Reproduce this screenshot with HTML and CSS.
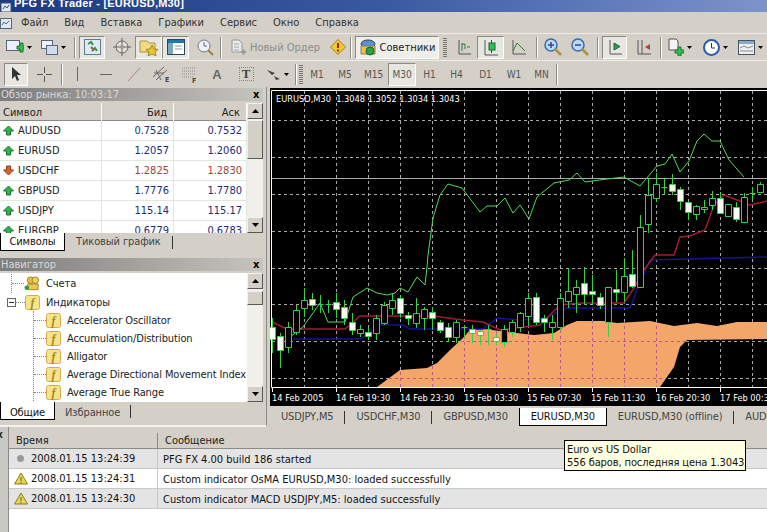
FILE: index.html
```html
<!DOCTYPE html>
<html lang="ru">
<head>
  <meta charset="UTF-8">
  <title>PFG FX Trader</title>
  <link rel="stylesheet" href="styles.css">
</head>
<body>
  <svg class="defs" width="0" height="0">
    <symbol id="up" viewBox="0 0 11 11"><path d="M5.5 1 10.5 6H7.5V10H3.5V6H.5z" fill="#2fb84a" stroke="#1c6b33"/></symbol>
    <symbol id="down" viewBox="0 0 11 11"><path d="M5.5 10 10.5 5H7.5V1H3.5V5H.5z" fill="#e0602c" stroke="#8a3a20"/></symbol>
    <symbol id="ind" viewBox="0 0 15 15"><rect x=".5" y=".5" width="14" height="14" rx="2" fill="#f7e48a" stroke="#d8a850"/><text x="7.5" y="12" class="ind-f">f</text></symbol>
    <symbol id="warn" viewBox="0 0 14 13"><path d="M7 1 13.500 12H.5z" fill="#e9d84a" stroke="#8a7a20"/><path d="M7 5V9M7 10v1.500" stroke="#555"/></symbol>
    <symbol id="arrow" viewBox="0 0 5 3"><path d="M0 0H5L2.500 3z" fill="#000"/></symbol>
  </svg>

  <div class="titlebar">
    <svg class="title-icon" width="12" height="12" viewBox="0 0 12 12"><rect x="1" y="3" width="10" height="9" fill="#dfe8f5" stroke="#456"/><path d="M3 9 5 6 7 8 9 5" fill="none" stroke="#357"/></svg>
    <span class="title-text">PFG FX Trader - [EURUSD,M30]</span>
  </div>

  <div class="menubar">
    <svg class="menu-icon" width="12" height="14" viewBox="0 0 12 14"><rect x=".5" y="2.500" width="11" height="10" fill="#dfe8f5" stroke="#567"/><path d="M2 9 4 6 6 8 9 5" fill="none" stroke="#468"/></svg>
    <span>Файл</span><span>Вид</span><span>Вставка</span><span>Графики</span><span>Сервис</span><span>Окно</span><span>Справка</span>
  </div>

  <div class="toolbar toolbar-main">
    <div class="tb"><svg width="18" height="16" viewBox="0 0 18 16"><rect x=".5" y="1.500" width="13" height="10" fill="#eef" stroke="#567"/><path d="M11 7h3V4h3v3h1v3h-1v3h-3v-3h-3z" fill="#2fc04a" stroke="#1c7a33"/></svg><svg class="dd" width="5" height="3"><use href="#arrow"/></svg></div>
    <div class="tb"><svg width="17" height="15" viewBox="0 0 17 15"><rect x=".5" y=".5" width="11" height="8" fill="#eef" stroke="#567"/><rect x="5.500" y="5.500" width="11" height="9" fill="#cfdcf0" stroke="#567"/></svg><svg class="dd" width="5" height="3"><use href="#arrow"/></svg></div>
    <div class="tb tb-sep"><i class="sep"></i></div>
    <div class="tb tb-on"><svg width="17" height="16" viewBox="0 0 17 16"><rect x=".5" y=".5" width="16" height="15" fill="#dfeaf8" stroke="#678"/><path d="M4 5 7 3 9 6M8 12 11 9 13 12" fill="none" stroke="#2a9a40" stroke-width="2"/><path d="M7 8 10 11" stroke="#c44" stroke-width="2"/></svg></div>
    <div class="tb tb-target"><svg width="20" height="20" viewBox="0 0 20 20"><circle cx="10" cy="10" r="6" fill="#e4e0d8" stroke="#666"/><path d="M10 1V19M1 10H19" stroke="#666"/><circle cx="10" cy="10" r="2" fill="#999"/></svg></div>
    <div class="tb tb-on"><svg width="20" height="18" viewBox="0 0 20 18"><path d="M1 3H8L10 5H16V14H1z" fill="#f2da84" stroke="#b09040"/><path d="M13 7 15 11 19 11.500 16 14 17 18 13 16 9 18 10 14 7 11.500 11 11z" fill="#e8c830" stroke="#a08820"/></svg></div>
    <div class="tb tb-on"><svg width="18" height="16" viewBox="0 0 18 16"><rect x=".5" y=".5" width="17" height="15" fill="#fff" stroke="#345"/><rect x="1" y="1" width="16" height="3" fill="#27a"/><rect x="1" y="4" width="5" height="11" fill="#7ab"/><path d="M8 7H15M8 10H15" stroke="#89a"/></svg></div>
    <div class="tb"><svg width="18" height="18" viewBox="0 0 18 18"><circle cx="8" cy="8" r="6" fill="#eef2f8" stroke="#778"/><path d="M8 4V8H11" fill="none" stroke="#667"/><path d="M12 12 17 17" stroke="#a08040" stroke-width="2"/></svg></div>
    <div class="tb tb-sep"><i class="sep"></i></div>
    <div class="tb tb-order"><svg width="17" height="17" viewBox="0 0 17 17"><path d="M2 1H9L12 4V13H2z" fill="#e8e8e8" stroke="#999"/><path d="M4 5H9M4 8H9M4 11H9" stroke="#aaa"/><path d="M11 13H16M13.500 10.500V15.500" stroke="#999" stroke-width="2"/></svg><span>Новый Ордер</span></div>
    <div class="tb"><svg width="16" height="16" viewBox="0 0 16 16"><path d="M8 .5 15.500 8 8 15.500 .5 8z" fill="#f0c830" stroke="#a08020"/><path d="M8 4V9M8 10.500V12.500" stroke="#a02010" stroke-width="2"/></svg></div>
    <div class="tb tb-sep"><i class="sep"></i></div>
    <div class="tb tb-on tb-expert"><svg width="18" height="17" viewBox="0 0 18 17"><ellipse cx="9" cy="5" rx="7" ry="4" fill="#5a90d8" stroke="#345"/><path d="M2 7H16V15H2z" fill="#f0c040" stroke="#876"/><circle cx="11" cy="12" r="4" fill="#2fa040" stroke="#164"/></svg><span>Советники</span></div>
    <div class="tb"><i class="grip"></i></div>
    <div class="tb"><svg width="14" height="16" viewBox="0 0 14 16"><path d="M2 1V15H14" fill="none" stroke="#555"/><path d="M5 4V12M5 5H8V10M10 8H13" fill="none" stroke="#2a7a40"/></svg></div>
    <div class="tb tb-on"><svg width="14" height="17" viewBox="0 0 14 17"><path d="M1 1V16H14" fill="none" stroke="#555"/><path d="M7.500 1V14" stroke="#164"/><rect x="5" y="4" width="6" height="7" fill="#2fc04a" stroke="#164"/></svg></div>
    <div class="tb"><svg width="14" height="16" viewBox="0 0 14 16"><path d="M1 1V15H14" fill="none" stroke="#555"/><path d="M1 12 5 4 9 8 13 12" fill="none" stroke="#2a7a40"/></svg></div>
    <div class="tb tb-sep tb-sep2"><i class="sep"></i></div>
    <div class="tb"><svg width="18" height="18" viewBox="0 0 18 18"><circle cx="7" cy="7" r="6" fill="#bcd8f4" stroke="#3a6ab0" stroke-width="1.500"/><path d="M4 7H10M7 4V10" stroke="#2a4a90" stroke-width="1.500"/><path d="M11 11 17 17" stroke="#b09040" stroke-width="2.500"/></svg></div>
    <div class="tb"><svg width="18" height="18" viewBox="0 0 18 18"><circle cx="7" cy="7" r="6" fill="#bcd8f4" stroke="#3a6ab0" stroke-width="1.500"/><path d="M4 7H10" stroke="#2a4a90" stroke-width="1.500"/><path d="M11 11 17 17" stroke="#b09040" stroke-width="2.500"/></svg></div>
    <div class="tb tb-sep tb-sep2"><i class="sep"></i></div>
    <div class="tb tb-on"><svg width="14" height="16" viewBox="0 0 14 16"><path d="M2 1V15H14" fill="none" stroke="#555"/><path d="M6 4V11L12 7.500z" fill="#2fa040" stroke="#164"/></svg></div>
    <div class="tb"><svg width="15" height="16" viewBox="0 0 15 16"><path d="M2 1V15H15M6 1V15" fill="none" stroke="#555"/><path d="M9 8 14 5V11z" fill="#b04040"/></svg></div>
    <div class="tb tb-sep"><i class="sep"></i></div>
    <div class="tb"><svg width="16" height="18" viewBox="0 0 16 18"><path d="M1 1H8L10 3V12H1z" fill="#f4f4f4" stroke="#555"/><path d="M7 12H10V9H13V12H16V15H13V18H10V15H7z" fill="#2fc04a" stroke="#1c7a33"/></svg><svg class="dd" width="5" height="3"><use href="#arrow"/></svg></div>
    <div class="tb"><svg width="17" height="17" viewBox="0 0 17 17"><circle cx="8.500" cy="8.500" r="7.500" fill="#fff" stroke="#2a5ab0" stroke-width="2"/><path d="M8.500 4V9H12" fill="none" stroke="#333"/></svg><svg class="dd" width="5" height="3"><use href="#arrow"/></svg></div>
    <div class="tb"><svg width="17" height="15" viewBox="0 0 17 15"><rect x=".5" y=".5" width="16" height="14" fill="#f0f0f0" stroke="#456"/><rect x="1" y="1" width="15" height="3" fill="#8aa8d0"/><path d="M2 8 6 6 10 8 15 6M2 11H15" fill="none" stroke="#888"/></svg><svg class="dd" width="5" height="3"><use href="#arrow"/></svg></div>
  </div>

  <div class="toolbar toolbar-draw">
    <div class="tb tb-on"><svg width="12" height="16" viewBox="0 0 12 16"><path d="M2 1V13L5 10 7 15 9 14 7 9H11z" fill="#333"/></svg></div>
    <div class="tb"><svg width="15" height="15" viewBox="0 0 15 15"><path d="M7.500 0V6M7.500 9V15M0 7.500H6M9 7.500H15" stroke="#555"/></svg></div>
    <div class="tb tb-sep tb-sep1"><i class="sep"></i></div>
    <div class="tb"><svg width="3" height="14"><path d="M1.500 0V14" stroke="#666"/></svg></div>
    <div class="tb"><svg width="12" height="3"><path d="M0 1.500H12" stroke="#666"/></svg></div>
    <div class="tb"><svg width="12" height="13"><path d="M0 13 12 0" stroke="#b08080"/></svg></div>
    <div class="tb"><svg width="18" height="17" viewBox="0 0 18 17"><path d="M0 11 11 1M3 14 14 4M1 7H11M3 4 8 14" fill="none" stroke="#666"/><text x="12" y="16" class="tool-letter">E</text></svg></div>
    <div class="tb"><svg width="16" height="17" viewBox="0 0 16 17"><path d="M0 2H14M0 5H14M0 8H14M0 11H11" stroke="#888" stroke-dasharray="1 1"/><text x="10" y="17" class="tool-letter">F</text></svg></div>
    <div class="tb tool-a">A</div>
    <div class="tb"><span class="tool-t">T</span></div>
    <div class="tb"><svg width="15" height="13" viewBox="0 0 15 13"><path d="M1 2 9 5 6 7zM8 8 14 11 10 12z" fill="#444"/></svg><svg class="dd" width="5" height="3"><use href="#arrow"/></svg></div>
    <div class="tb tb-sep tb-sep1"><i class="sep"></i></div>
    <div class="tb"><i class="grip"></i></div>
    <div class="tb tf">M1</div><div class="tb tf">M5</div><div class="tb tf">M15</div><div class="tb tf tb-on">M30</div>
    <div class="tb tf">H1</div><div class="tb tf">H4</div><div class="tb tf">D1</div><div class="tb tf">W1</div><div class="tb tf">MN</div>
    <div class="tb"><i class="sep"></i></div>
  </div>

  <div class="workspace">
    <div class="side">
      <section class="panel panel-market">
        <div class="panel-title"><span>Обзор рынка: 10:03:17</span><b>x</b></div>
        <div class="panel-body">
          <div class="market">
            <div class="market-row market-head"><span>Символ</span><span>Бид</span><span>Аск</span></div>
            <div class="market-row"><span class="sym"><svg width="11" height="11"><use href="#up"/></svg>AUDUSD</span><span>0.7528</span><span>0.7532</span></div>
            <div class="market-row"><span class="sym"><svg width="11" height="11"><use href="#up"/></svg>EURUSD</span><span>1.2057</span><span>1.2060</span></div>
            <div class="market-row is-down"><span class="sym"><svg width="11" height="11"><use href="#down"/></svg>USDCHF</span><span>1.2825</span><span>1.2830</span></div>
            <div class="market-row"><span class="sym"><svg width="11" height="11"><use href="#up"/></svg>GBPUSD</span><span>1.7776</span><span>1.7780</span></div>
            <div class="market-row"><span class="sym"><svg width="11" height="11"><use href="#up"/></svg>USDJPY</span><span>115.14</span><span>115.17</span></div>
            <div class="market-row"><span class="sym"><svg width="11" height="11"><use href="#up"/></svg>EURGBP</span><span>0.6779</span><span>0.6783</span></div>
          </div>
          <div class="scrollbar">
            <div class="sb-btn"><svg width="7" height="4"><path d="M3.500 0 7 4H0z"/></svg></div>
            <div class="sb-thumb sb-thumb-market"></div>
            <div class="sb-track"></div>
            <div class="sb-btn"><svg width="7" height="4"><path d="M3.500 4 7 0H0z"/></svg></div>
          </div>
        </div>
        <div class="tabs">
          <span class="tab tab-on tab-sym">Символы</span><span class="tab tab-tick">Тиковый график</span><i class="tab-sep"></i>
        </div>
      </section>

      <section class="panel panel-nav">
        <div class="panel-title"><span>Навигатор</span><b>x</b></div>
        <div class="panel-body">
          <div class="tree">
            <div class="tree-row tree-top"><i class="conn"></i><svg width="16" height="15" viewBox="0 0 17 15"><circle cx="7" cy="4" r="3.500" fill="#e8c040" stroke="#a08020"/><circle cx="12" cy="4" r="3.500" fill="#f0d060" stroke="#a08020"/><path d="M4 8H15V14H4z" fill="#f0c850" stroke="#a08020"/><circle cx="3" cy="12" r="2.500" fill="#2fa040"/></svg><span>Счета</span></div>
            <div class="tree-row tree-open"><i class="minus"></i><i class="conn conn-short"></i><svg width="15" height="15"><use href="#ind"/></svg><span>Индикаторы</span></div>
            <div class="tree-kids">
              <div class="tree-row"><i class="conn"></i><svg width="15" height="15"><use href="#ind"/></svg><span>Accelerator Oscillator</span></div>
              <div class="tree-row"><i class="conn"></i><svg width="15" height="15"><use href="#ind"/></svg><span>Accumulation/Distribution</span></div>
              <div class="tree-row"><i class="conn"></i><svg width="15" height="15"><use href="#ind"/></svg><span>Alligator</span></div>
              <div class="tree-row"><i class="conn"></i><svg width="15" height="15"><use href="#ind"/></svg><span>Average Directional Movement Index</span></div>
              <div class="tree-row"><i class="conn"></i><svg width="15" height="15"><use href="#ind"/></svg><span>Average True Range</span></div>
            </div>
          </div>
          <div class="scrollbar">
            <div class="sb-btn"><svg width="7" height="4"><path d="M3.500 0 7 4H0z"/></svg></div>
            <div class="sb-thumb sb-thumb-nav"></div>
            <div class="sb-track"></div>
            <div class="sb-btn"><svg width="7" height="4"><path d="M3.500 4 7 0H0z"/></svg></div>
          </div>
        </div>
        <div class="tabs">
          <span class="tab tab-on tab-common">Общие</span><span class="tab tab-fav">Избранное</span><i class="tab-sep"></i>
        </div>
      </section>
    </div>

    <div class="main">
      <svg class="chart" width="497" height="318" viewBox="270 88 497 318">
        <defs>
          <clipPath id="cloud-clip"><path d="M377 387 400 370 427 368 437 363 450 350 463 338 470 330 483 329 500 331 517 333 534 335 554 333 567 325 577 321 604 321 617 323 650 321 674 326 697 323 717 326 737 322 767 322V339L687 340 680 347 674 367 660 387z"/></clipPath>
        </defs>
        <rect class="chart-bg" x="270" y="88" width="497" height="318"/>
        <path class="grid" d="M304.500 91V387M336.500 91V387M368.500 91V387M400.500 91V387M432.500 91V387M464.500 91V387M496.500 91V387M528.500 91V387M560.500 91V387M592.500 91V387M624.500 91V387M656.500 91V387M688.500 91V387M720.500 91V387M752.500 91V387M272 120.500H767M272 157.500H767M272 194.500H767M272 231.500H767M272 268.500H767M272 304.500H767M272 341.500H767M272 378.500H767"/>
        <path class="last-price" d="M272 178.500H767"/>
        <path class="cloud" d="M377 387 400 370 427 368 437 363 450 350 463 338 470 330 483 329 500 331 517 333 534 335 554 333 567 325 577 321 604 321 617 323 650 321 674 326 697 323 717 326 737 322 767 322V339L687 340 680 347 674 367 660 387z"/>
        <path class="grid grid-over" clip-path="url(#cloud-clip)" d="M400.500 330V387M432.500 330V387M464.500 330V387M496.500 330V387M528.500 330V387M560.500 330V387M592.500 320V387M624.500 320V387M656.500 320V387M377 341.500H690M377 378.500H665"/>
        <polyline class="line-blue" points="293,339 360,339 380,325 403,325 410,329 483,329 497,318 520,320 545,318 567,308 630,308 637,290 650,260 767,257"/>
        <polyline class="line-red" points="272,322 287,329 345,329 360,316 433,316 463,320 483,322 500,330 540,325 560,305 580,303 624,303 634,288 644,270 655,255 674,255 680,237 690,236 705,230 714,205 724,195 737,200 750,205 767,201"/>
        <polyline class="line-green" points="290,337 303,327 313,313 320,303 328,322 345,322 353,297 367,288 377,293 387,295 395,293 400,288 408,292 417,277 425,285 427,267 428,255 433,218 440,195 448,184 462,188 480,212 487,206 497,206 505,198 513,213 520,205 529,219 537,197 554,183 569,180 577,173 585,182 607,179 624,177 640,186 657,166 665,164 672,154 680,172 689,161 697,141 704,134 712,141 720,141 729,160 744,177"/>
        <path class="wick" d="M272.500 318V353M280.500 333V368M288.500 322V353M296.500 305V335M304.500 288V317M312.500 293V310M320.500 295V313M328.500 300V313M336.500 293V318M344.500 300V325M352.500 313V335M360.500 325V337M368.500 328V340M376.500 315V340M384.500 302V325M392.500 293V315M400.500 295V318M408.500 312V325M416.500 298V328M424.500 307V330M432.500 308V330M440.500 320V333M448.500 323V342M456.500 320V343M464.500 325V338M472.500 325V343M480.500 330V345M488.500 325V345M496.500 333V345M504.500 325V347M512.500 320V337M520.500 312V332M528.500 293V325M536.500 293V325M544.500 315V332M552.500 315V340M560.500 293V330M568.500 268V308M576.500 280V313M584.500 267V305M592.500 275V305M600.500 293V309M608.500 287V337M616.500 270V302M624.500 258V302M632.500 250V288M640.500 215V287M648.500 178V233M656.500 173V202M664.500 178V195M672.500 174V195M680.500 187V210M688.500 202V220M696.500 205V220M704.500 200V213M712.500 191V210M720.500 192V213M728.500 204V217M736.500 202V222M744.500 193V222M752.500 187V200M760.500 182V193M317.500 304.500H323.500M325.500 304.500H331.500M461.500 327.500H467.500M485.500 329.500H491.500M661.500 187.500H667.500M749.500 193.500H755.500"/>
        <path class="body-open" d="M285.500 327.500h6v20h-6zM293.500 310.500h6v22h-6zM301.500 300.500h6v8h-6zM357.500 329.500h6v4h-6zM373.500 318.500h6v15h-6zM381.500 305.500h6v18h-6zM389.500 300.500h6v8h-6zM413.500 313.500h6v10h-6zM421.500 309.500h6v9h-6zM453.500 322.500h6v15h-6zM501.500 329.500h6v13h-6zM509.500 322.500h6v10h-6zM517.500 313.500h6v14h-6zM525.500 298.500h6v18h-6zM549.500 322.500h6v5h-6zM557.500 298.500h6v29h-6zM565.500 291.500h6v10h-6zM573.500 287.500h6v7h-6zM605.500 287.500h6v35h-6zM621.500 276.500h6v16h-6zM637.500 227.500h6v60h-6zM645.500 195.500h6v29h-6zM653.500 184.500h6v14h-6zM693.500 206.500h6v8h-6zM701.500 207.500h6v2h-6zM709.500 198.500h6v7h-6zM725.500 204.500h6v12h-6zM741.500 197.500h6v25h-6zM757.500 184.500h6v8h-6z"/>
        <path class="body-full" d="M269.500 327.500h6v12h-6zM277.500 336.500h6v14h-6zM309.500 299.500h6v6h-6zM333.500 302.500h6v7h-6zM341.500 307.500h6v11h-6zM349.500 322.500h6v8h-6zM365.500 332.500h6v4h-6zM397.500 298.500h6v15h-6zM405.500 315.500h6v3h-6zM429.500 312.500h6v6h-6zM437.500 322.500h6v8h-6zM445.500 327.500h6v10h-6zM469.500 329.500h6v4h-6zM477.500 331.500h6v4h-6zM493.500 337.500h6v4h-6zM533.500 297.500h6v25h-6zM541.500 318.500h6v4h-6zM581.500 283.500h6v11h-6zM589.500 291.500h6v3h-6zM597.500 297.500h6v8h-6zM613.500 289.500h6v3h-6zM629.500 274.500h6v12h-6zM669.500 184.500h6v7h-6zM677.500 189.500h6v12h-6zM685.500 202.500h6v10h-6zM717.500 198.500h6v15h-6zM733.500 207.500h6v12h-6z"/>
        <path class="frame" d="M767 90.500H271.500V387.500H767"/>
        <path class="frame" d="M272.500 387V392M336.500 387V392M400.500 387V392M464.500 387V392M528.500 387V392M592.500 387V392M656.500 387V392M720.500 387V392"/>
        <text class="chart-text" x="276" y="102">EURUSD,M30  1.3048 1.3052 1.3034 1.3043</text>
        <g class="chart-text">
          <text x="272" y="401">14 Feb 2005</text>
          <text x="336" y="401">14 Feb 19:30</text>
          <text x="400" y="401">14 Feb 23:30</text>
          <text x="464" y="401">15 Feb 03:30</text>
          <text x="527" y="401">15 Feb 07:30</text>
          <text x="591" y="401">15 Feb 11:30</text>
          <text x="656" y="401">16 Feb 20:30</text>
          <text x="720" y="401">17 Feb 00:30</text>
        </g>
      </svg>
      <div class="chart-tabs">
        <span>USDJPY,M5</span><i class="tab-sep"></i>
        <span>USDCHF,M30</span><i class="tab-sep"></i>
        <span>GBPUSD,M30</span>
        <span class="chart-tab-on">EURUSD,M30</span>
        <span>EURUSD,M30 (offline)</span><i class="tab-sep"></i>
        <span>AUDUSD,M30</span>
      </div>
    </div>
  </div>

  <div class="terminal">
    <div class="terminal-strip"><b>x</b></div>
    <div class="journal">
      <div class="journal-head"><span>Время</span><span>Сообщение</span></div>
      <div class="journal-row row-alt"><span class="journal-time"><i class="dot"></i>2008.01.15 13:24:39</span><span>PFG FX 4.00 build 186 started</span></div>
      <div class="journal-row"><span class="journal-time"><svg width="14" height="13"><use href="#warn"/></svg>2008.01.15 13:24:31</span><span>Custom indicator OsMA EURUSD,M30: loaded successfully</span></div>
      <div class="journal-row row-alt"><span class="journal-time"><svg width="14" height="13"><use href="#warn"/></svg>2008.01.15 13:24:30</span><span>Custom indicator MACD USDJPY,M5: loaded successfully</span></div>
    </div>
    <div class="tooltip">Euro vs US Dollar<br>556 баров, последняя цена 1.3043</div>
  </div>
</body>
</html>
```

FILE: styles.css
```css
/* Reset styles */
* {
  margin: 0;
  padding: 0;
  box-sizing: border-box;
}

html, body {
  width: 767px;
  height: 532px;
  overflow: hidden;
}

body {
  font-family: "DejaVu Sans Condensed", "DejaVu Sans", sans-serif;
  font-size: 10px;
  background-color: #d4d0c8;
  color: #222;
  display: flex;
  flex-direction: column;
}

i {
  display: block;
}

.defs {
  position: absolute;
}

.ind-f {
  font-family: "Liberation Serif", serif;
  font-style: italic;
  font-weight: bold;
  font-size: 12px;
  fill: #a08a20;
  text-anchor: middle;
}

/* Title + menu */
.titlebar {
  height: 12px;
  flex: none;
  overflow: hidden;
  display: flex;
  align-items: flex-end;
  gap: 2px;
  background: linear-gradient(to right, #1c3a80, #3a5aa0 50%, #7c94cc);
  color: #fff;
}

.title-text {
  font-family: "Liberation Sans", sans-serif;
  font-weight: bold;
  font-size: 11px;
  letter-spacing: .2px;
  line-height: 14px;
  margin-bottom: 2px;
}

.menubar {
  height: 21px;
  flex: none;
  display: flex;
  align-items: center;
  font-size: 11px;
  color: #333;
}

.menubar span {
  padding: 0 8px;
}

.menu-icon {
  margin-right: 1px;
}

/* Toolbars */
.toolbar {
  height: 27px;
  flex: none;
  display: grid;
  align-items: center;
  padding-left: 4px;
  border-top: 1px solid #efece6;
}

.toolbar-main {
  grid-template-columns: 29px 41px 5px 26px 30px 27px 27px 31px 5px 100px 25px 5px 84px 11px 27px 27px 30px 6px 25px 30px 7px 25px 33px 5px 30px 40px 30px;
}

.toolbar-draw {
  grid-template-columns: 24px 32px 4px 26px 32px 24px 32px 24px 30px 28px 34px 4px 5px 28px 28px 29px 28px 27px 27px 31px 26px 29px 2px;
}

.tb {
  height: 23px;
  display: flex;
  align-items: center;
  justify-content: center;
  gap: 3px;
  color: #666;
}

.tb-on {
  border: 1px solid;
  border-color: #8c8a84 #fff #fff #8c8a84;
  background-color: #e8e6e0;
}

.tb-sep {
  justify-content: flex-start;
}

.tb-sep1 {
  padding-left: 1px;
}

.tb-sep2 {
  padding-left: 2px;
}

.tb-target {
  padding-left: 4px;
}

.sep {
  width: 2px;
  height: 21px;
  border-left: 1px solid #8c8a84;
  border-right: 1px solid #fff;
}

.grip {
  width: 4px;
  height: 19px;
  background: repeating-linear-gradient(to bottom, #77756f 0 1px, #d4d0c8 1px 2px);
}

.tb-order {
  justify-content: flex-start;
  padding-left: 5px;
  color: #8c8c8c;
  font-size: 11px;
}

.tb-expert {
  color: #222;
  font-size: 11px;
  background-color: #f0eee8;
}

.tf {
  font-size: 10px;
  color: #555;
}

.tool-letter {
  font-size: 7px;
  font-weight: bold;
  fill: #444;
}

.tool-a {
  font-family: "Liberation Sans", sans-serif;
  font-weight: bold;
  font-size: 13px;
  color: #666;
}

.tool-t {
  font-family: "Liberation Serif", serif;
  font-weight: bold;
  font-size: 13px;
  line-height: 12px;
  width: 13px;
  text-align: center;
  color: #444;
  outline: 1px dotted #888;
}

/* Workspace */
.workspace {
  height: 340px;
  flex: none;
  display: flex;
}

.side {
  width: 267px;
  margin-right: 3px;
  flex: none;
  padding: 1px 3px 0 0;
  display: flex;
  flex-direction: column;
  border-right: 1px solid #8c8a84;
  border-bottom: 2px solid #f4f2ee;
}

.panel-title {
  height: 13px;
  padding-left: 1px;
  display: flex;
  justify-content: space-between;
  align-items: center;
  background: linear-gradient(to right, #7d7d7d, #c6c4be);
  color: #d8d8d8;
  font-size: 11px;
}

.panel-title b {
  width: 10px;
  color: #000;
}

.panel-body {
  margin-top: 2px;
  display: flex;
  background-color: #fff;
  overflow: hidden;
}

.panel-market .panel-body {
  height: 130px;
}

.panel-nav {
  margin-top: 7px;
}

.panel-nav .panel-body {
  height: 129px;
}

.tabs {
  height: 18px;
  display: flex;
  align-items: flex-start;
  color: #444;
  font-size: 11px;
  letter-spacing: -.1px;
}

.tab {
  height: 18px;
  line-height: 18px;
  text-align: center;
}

.panel-nav .tab {
  line-height: 21px;
}

.tab-on {
  background-color: #fff;
  border: 1px solid #000;
  border-width: 0 1px 1px 1px;
  color: #111;
}

.tab-sym {
  width: 65px;
}

.tab-tick {
  padding: 0 11px;
}

.tab-common {
  width: 55px;
}

.tab-fav {
  padding: 0 10px;
}

.tab-sep {
  width: 1px;
  height: 13px;
  flex: none;
  margin-top: 3px;
  background-color: #333;
}

/* Market watch */
.market {
  width: 247px;
  flex: none;
  font-size: 11px;
}

.market-row {
  height: 20px;
  display: grid;
  grid-template-columns: 102px 72px 73px;
  align-items: center;
  border-bottom: 1px solid #dfe8dc;
  color: #1c2c78;
}

.market-row span {
  height: 100%;
  padding-right: 4px;
  text-align: right;
  line-height: 19px;
  border-right: 1px solid #dfe8dc;
}

.market-row .sym {
  display: flex;
  align-items: center;
  gap: 4px;
  padding-left: 3px;
  text-align: left;
  color: #222;
}

.is-down {
  color: #b03a3a;
}

.market-head {
  height: 18px;
  background-color: #d4d0c8;
  border-bottom: 1px solid #8c8a84;
  color: #222;
}

.market-head span {
  line-height: 19px;
  padding-right: 6px;
  border-right: 1px solid #fff;
}

.market-head span:first-child {
  padding-left: 3px;
  text-align: left;
}

/* Scrollbars */
.scrollbar {
  width: 16px;
  flex: none;
  display: flex;
  flex-direction: column;
  background-color: #f0efe9;
}

.sb-btn, .sb-thumb {
  flex: none;
  background-color: #d4d0c8;
  border: 1px solid;
  border-color: #f4f2ee #5a5954 #5a5954 #f4f2ee;
}

.sb-btn {
  height: 16px;
  display: flex;
  align-items: center;
  justify-content: center;
}

.sb-thumb-market {
  height: 39px;
  margin-top: 1px;
}

.sb-thumb-nav {
  height: 14px;
  margin-top: 2px;
}

.sb-track {
  flex: 1;
}

/* Navigator tree */
.tree {
  width: 247px;
  flex: none;
  padding-top: 1px;
  font-size: 11px;
  letter-spacing: -.12px;
}

.tree-row {
  height: 18px;
  display: flex;
  align-items: center;
  gap: 6px;
  white-space: nowrap;
}

.tree-row svg {
  flex: none;
  margin-left: -6px;
}

.conn {
  width: 12px;
  flex: none;
  border-top: 1px dotted #888;
}

.conn-short {
  width: 9px;
}

.tree-top {
  margin-left: 11px;
  border-left: 1px dotted #888;
  height: 19px;
}

.tree-open {
  padding-left: 7px;
  gap: 6px;
}

.minus {
  width: 9px;
  height: 9px;
  flex: none;
  margin-right: -6px;
  border: 1px solid #666;
  background: linear-gradient(#333, #333) center / 5px 1px no-repeat #fff;
}

.tree-kids {
  margin-left: 33px;
  border-left: 1px dotted #888;
}

/* Chart */
.main {
  flex: 1;
  padding-top: 1px;
  display: flex;
  flex-direction: column;
  min-width: 0;
}

.chart {
  display: block;
  flex: none;
  font-family: "DejaVu Sans Condensed", "DejaVu Sans", sans-serif;
}

.chart-bg {
  fill: #000;
}

.grid {
  fill: none;
  stroke: #a8a8a8;
  stroke-dasharray: 3 3;
}

.grid-over {
  stroke: #b85a8a;
}

.last-price {
  stroke: #a8a8b0;
}

.cloud {
  fill: #f4a66a;
}

.line-blue, .line-red, .line-green {
  fill: none;
}

.line-blue {
  stroke: #14148c;
  stroke-width: 1.500;
}

.line-red {
  stroke: #a01c30;
  stroke-width: 1.500;
}

.line-green {
  stroke: #52d85a;
}

.wick {
  fill: none;
  stroke: #38d048;
}

.body-open {
  fill: #000;
  stroke: #38d048;
}

.body-full {
  fill: #f4fff0;
  stroke: #38d048;
}

.frame {
  fill: none;
  stroke: #fff;
}

.chart-text {
  fill: #fff;
  font-size: 9.200px;
  white-space: pre;
}

.chart-tabs {
  height: 21px;
  display: flex;
  align-items: flex-start;
  white-space: nowrap;
  overflow: hidden;
  padding-top: 2px;
  color: #444;
  font-size: 11px;
  letter-spacing: -.15px;
}

.chart-tabs span {
  flex: none;
  padding: 0 11px;
  line-height: 18px;
}

.chart-tabs .chart-tab-on {
  width: 88px;
  height: 18px;
  padding: 0;
  text-align: center;
  background-color: #fff;
  color: #111;
  border: 1px solid #000;
  border-top: 0;
}

/* Journal */
.terminal {
  height: 105px;
  flex: none;
  position: relative;
  display: flex;
  background-color: #fff;
}

.terminal-strip {
  width: 9px;
  flex: none;
  padding-top: 3px;
  background-color: #c9c8c4;
  border-right: 1px solid #8c8a84;
  overflow: hidden;
}

.terminal-strip b {
  display: block;
  margin-left: -3px;
  line-height: 10px;
}

.journal {
  flex: 1;
  font-size: 11px;
}

.journal-head {
  height: 22px;
  padding-top: 6px;
  display: grid;
  grid-template-columns: 149px 1fr;
  background-color: #d4d0c8;
  border-bottom: 1px solid #8c8a84;
  line-height: 15px;
}

.journal-head span {
  padding-left: 7px;
}

.journal-head span:first-child {
  border-right: 1px solid #8c8a84;
}

.journal-row {
  height: 20px;
  display: grid;
  grid-template-columns: 149px 1fr;
  align-items: start;
  border-bottom: 1px solid #c8c8c8;
  color: #111;
}

.journal-row span {
  padding-left: 5px;
  line-height: 21px;
}

.journal-time {
  display: flex;
  align-items: center;
  gap: 3px;
  height: 19px;
  border-right: 1px solid #c8c8c8;
}

.row-alt {
  background-color: #e4e4e4;
}

.dot {
  width: 7px;
  height: 7px;
  margin: 0 4px 0 3px;
  border-radius: 50%;
  background-color: #999;
}

.tooltip {
  position: absolute;
  left: 564px;
  top: 13px;
  width: 182px;
  height: 31px;
  padding: 2px 0 0 2px;
  background-color: #ffffe1;
  border: 1px solid #000;
  color: #111;
  font-size: 11px;
  letter-spacing: -.1px;
  line-height: 13px;
  white-space: nowrap;
}
```
